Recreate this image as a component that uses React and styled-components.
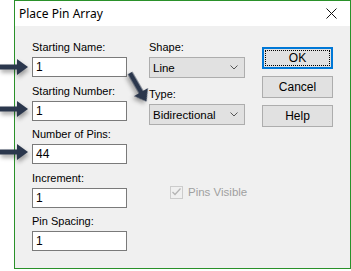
import React from 'react';
import styled, { createGlobalStyle } from 'styled-components';

const GlobalStyle = createGlobalStyle`
  html, body {
    margin: 0;
    padding: 0;
    background: #ffffff;
  }
  body {
    font-family: "Liberation Sans", Arial, sans-serif;
  }
`;

const Page = styled.div`
  position: relative;
  width: 351px;
  height: 271px;
  overflow: hidden;
  background: #ffffff;
`;

const Window = styled.div`
  margin-left: 14px;
  width: 335px;
  height: 267px;
  border: 1px solid #2a912a;
  background: #f0f0f0;
  display: flex;
  flex-direction: column;
`;

const TitleBar = styled.div`
  height: 25px;
  background: #ffffff;
  display: flex;
  align-items: center;
  justify-content: space-between;
  padding: 0 13px 0 4px;
`;

const Title = styled.span`
  font-family: "Noto Sans", "Segoe UI", sans-serif;
  font-size: 12px;
  color: #000000;
`;

const CloseIcon = () => (
  <svg width="11" height="11" viewBox="0 0 11 11">
    <path d="M0.5 0.5 L10.5 10.5 M10.5 0.5 L0.5 10.5" stroke="#111" strokeWidth="1" fill="none" />
  </svg>
);

const Body = styled.div`
  flex: 1;
  display: flex;
  padding: 14px 0 0 17px;
`;

const FieldColumn = styled.div`
  width: 95px;
  display: flex;
  flex-direction: column;
  gap: 6.5px;
`;

const MiddleColumn = styled.div`
  width: 96px;
  margin-left: 22px;
  display: flex;
  flex-direction: column;
`;

const ButtonColumn = styled.div`
  width: 71px;
  margin-left: 17px;
  margin-top: 7px;
  display: flex;
  flex-direction: column;
  gap: 7px;
`;

const Field = styled.div`
  display: flex;
  flex-direction: column;
  gap: ${p => p.$gap || 3}px;
  margin-bottom: ${p => p.$after || 0}px;
`;

const Label = styled.label`
  font-size: 11px;
  line-height: 14px;
  color: #000000;
`;

const TextBox = styled.div`
  box-sizing: border-box;
  height: 20px;
  border: 1px solid #7a7a7a;
  background: #ffffff;
  font-size: 12px;
  line-height: 18px;
  padding-left: 3px;
  color: #000000;
`;

const Combo = styled.div`
  box-sizing: border-box;
  height: 21px;
  border: 1px solid #adadad;
  background: #e1e1e1;
  display: flex;
  align-items: center;
  justify-content: space-between;
  padding: 0 6px 0 3px;
  font-size: 11.5px;
  color: #000000;
`;

const Chevron = () => (
  <svg width="8" height="5" viewBox="0 0 8 5">
    <path d="M0.5 0.5 L4 4 L7.5 0.5" stroke="#555" strokeWidth="1" fill="none" />
  </svg>
);

const CheckRow = styled.div`
  display: flex;
  align-items: center;
  gap: 5px;
  margin: 0 0 0 21px;
  font-size: 11.5px;
  line-height: 14px;
  white-space: nowrap;
  color: #a0a0a0;
`;

const CheckBox = styled.span`
  box-sizing: border-box;
  flex: none;
  width: 13px;
  height: 13px;
  border: 1px solid #cccccc;
  background: #f0f0f0;
  display: flex;
  align-items: center;
  justify-content: center;
`;

const Button = styled.div`
  position: relative;
  box-sizing: border-box;
  height: 22px;
  background: #e1e1e1;
  border: 1px solid ${p => (p.$default ? '#0078d7' : '#adadad')};
  box-shadow: ${p => (p.$default ? 'inset 0 0 0 1px #0078d7' : 'none')};
  display: flex;
  align-items: center;
  justify-content: center;
  font-size: 12px;
  color: #000000;
`;

const FocusRing = styled.span`
  position: absolute;
  inset: 2px;
  border: 1px dotted #000000;
`;

const Pointer = styled.div`
  position: absolute;
  left: ${p => p.$left}px;
  top: ${p => p.$top}px;
  transform: rotate(${p => p.$angle || 0}deg);
  transform-origin: 0 9px;
  filter: drop-shadow(1px 3px 2px rgba(0, 0, 0, 0.35));
  line-height: 0;
`;

const ArrowShape = ({ length }) => (
  <svg width={length} height="18" viewBox={`0 0 ${length} 18`}>
    <path
      d={`M0 6.5 H${length - 11} V1 L${length} 9 L${length - 11} 17 V11.5 H0 Z`}
      fill="#2b374d"
    />
  </svg>
);

const fields = [
  { label: 'Starting Name:', value: '1' },
  { label: 'Starting Number:', value: '1' },
  { label: 'Number of Pins:', value: '44' },
  { label: 'Increment:', value: '1' },
  { label: 'Pin Spacing:', value: '1' },
];

export default function App() {
  return (
    <Page>
      <GlobalStyle />
      <Window>
        <TitleBar>
          <Title>Place Pin Array</Title>
          <CloseIcon />
        </TitleBar>
        <Body>
          <FieldColumn>
            {fields.map(f => (
              <Field key={f.label}>
                <Label>{f.label}</Label>
                <TextBox>{f.value}</TextBox>
              </Field>
            ))}
          </FieldColumn>
          <MiddleColumn>
            <Field $after={9}>
              <Label>Shape:</Label>
              <Combo>Line<Chevron /></Combo>
            </Field>
            <Field $after={60}>
              <Label>Type:</Label>
              <Combo>Bidirectional<Chevron /></Combo>
            </Field>
            <CheckRow>
              <CheckBox>
                <svg width="9" height="8" viewBox="0 0 9 8">
                  <path d="M0.5 4 L3 6.5 L8.5 0.5" stroke="#b5b5b5" strokeWidth="1.3" fill="none" />
                </svg>
              </CheckBox>
              Pins Visible
            </CheckRow>
          </MiddleColumn>
          <ButtonColumn>
            <Button $default>OK<FocusRing /></Button>
            <Button>Cancel</Button>
            <Button>Help</Button>
          </ButtonColumn>
        </Body>
      </Window>
      <Pointer $left={0} $top={58}><ArrowShape length={28} /></Pointer>
      <Pointer $left={0} $top={100}><ArrowShape length={28} /></Pointer>
      <Pointer $left={0} $top={143}><ArrowShape length={28} /></Pointer>
      <Pointer $left={130} $top={64} $angle={60}><ArrowShape length={33} /></Pointer>
    </Page>
  );
}
